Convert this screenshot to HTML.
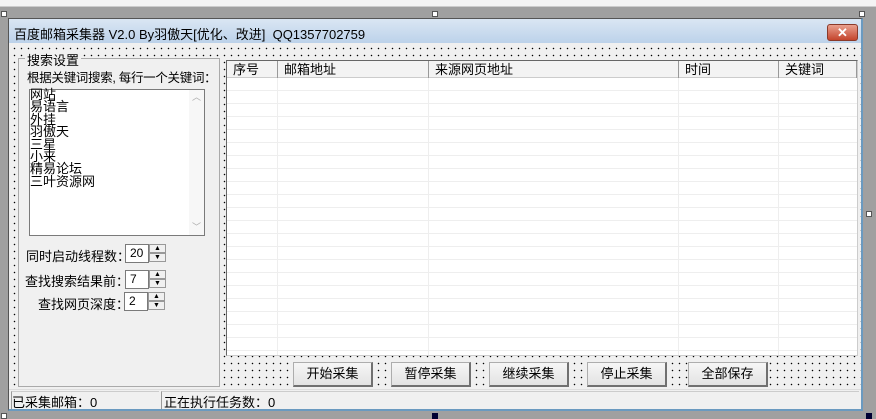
<!DOCTYPE html><html><head><meta charset="utf-8"><style>
*{margin:0;padding:0;box-sizing:border-box}
body{width:876px;height:418px;overflow:hidden;background:#a0a0a0;font-family:"Liberation Sans","Noto Sans CJK SC",sans-serif;font-size:12px;color:#000;position:relative}
.a{position:absolute}
.dots{background-color:#f0f0f0;background-image:radial-gradient(circle,#000 0.6px,transparent 0.9px);background-size:7px 7px;background-position:2px 2px}
.btn{position:absolute;top:362px;width:80px;height:25px;background:linear-gradient(#f6f6f6,#e3e3e3);border:1px solid #adadad;border-right:2px solid #707070;border-bottom:2px solid #707070;text-align:center;line-height:22px;font-size:13px}
.h{position:absolute;width:6px;height:6px;border:1px solid #555;background:#fff}
.col{position:absolute;top:0;height:17px;border-right:1px solid #999;padding-left:6px;line-height:17px;font-size:13px}
.spin{position:absolute;width:42px;height:19px}
.spin .i{position:absolute;left:0;top:0;width:24px;height:19px;border:1px solid #7a7a7a;background:#fff;padding-left:4px;line-height:17px}
.spin .u,.spin .d{position:absolute;left:24px;width:17px;height:9px;border:1px solid #999;background:#f0f0f0;font-size:7px;line-height:7px;text-align:center}
.spin .u{top:0}.spin .d{top:9px}
.lbl{position:absolute;font-size:13px}
</style></head><body>
<div class="a" style="left:0;top:0;width:876px;height:7px;background:#f4f4f4;border-bottom:1px solid #ccc"></div>
<div class="h" style="left:1px;top:11px"></div><div class="h" style="left:432px;top:11px"></div><div class="h" style="left:859px;top:11px"></div>
<div class="h" style="left:866px;top:211px"></div><div class="h" style="left:1px;top:413px"></div><div class="h" style="left:432px;top:413px;background:#003;border-color:#003"></div><div class="h" style="left:866px;top:413px;background:#003;border-color:#003"></div>
<div class="a" style="left:8px;top:18px;width:855px;height:393px;background:#f0f0f0;border:1px solid #555;border-right:2px solid #6a9ac0;border-bottom:2px solid #6a9ac0"></div>
<div class="a" style="left:9px;top:19px;width:852px;height:24px;background:linear-gradient(#dae6f3,#bcd2ea)"></div>
<div class="a" style="left:14px;top:24px;font-size:13px">百度邮箱采集器 V2.0 By羽傲天[优化、改进]&nbsp; QQ1357702759</div>
<div class="a" style="left:827px;top:24px;width:31px;height:17px;border:1px solid #8a3a2a;border-radius:3px;background:linear-gradient(#e9a08e,#c4452c);color:#fff;font-weight:bold;text-align:center;line-height:15px;font-size:13px">✕</div>
<div class="a dots" style="left:9px;top:43px;width:852px;height:346px"></div>
<div class="a" style="left:18px;top:58px;width:202px;height:329px;background:#f0f0f0;border:1px solid #aaa"></div>
<div class="lbl" style="left:25px;top:50px;background:#f0f0f0;padding:0 2px">搜索设置</div>
<div class="lbl" style="left:27px;top:67px;font-size:12.5px;letter-spacing:-0.3px">根据关键词搜索, 每行一个关键词：</div>
<div class="a" style="left:29px;top:89px;width:176px;height:147px;background:#fff;border:1px solid #7a7a7a"></div>
<div class="a" style="left:189px;top:90px;width:15px;height:145px;background:#f7f7f7;color:#aaa;font-size:9px;text-align:center">︿<div style="position:absolute;bottom:2px;width:15px">﹀</div></div>
<div class="a" style="left:30px;top:89px;font-size:13px;line-height:12.4px">网站<br>易语言<br>外挂<br>羽傲天<br>三星<br>小来<br>精易论坛<br>三叶资源网</div>
<div class="lbl" style="left:26px;top:246px">同时启动线程数：</div>
<div class="spin" style="left:125px;top:244px"><div class="i">20</div><div class="u">▲</div><div class="d">▼</div></div>
<div class="lbl" style="left:25px;top:271px">查找搜索结果前：</div>
<div class="spin" style="left:125px;top:270px"><div class="i">7</div><div class="u">▲</div><div class="d">▼</div></div>
<div class="lbl" style="left:38px;top:294px">查找网页深度：</div>
<div class="spin" style="left:124px;top:292px"><div class="i">2</div><div class="u">▲</div><div class="d">▼</div></div>
<div class="a" style="left:226px;top:60px;width:632px;height:296px;border:1px solid #666;border-right-color:#ccc;border-bottom-color:#ccc;background-color:#fff;background-image:linear-gradient(#eee 1px,transparent 1px);background-size:100% 13px;background-position:0 3px;overflow:hidden">
<div class="a" style="left:50px;top:17px;width:1px;height:280px;background:#eee"></div>
<div class="a" style="left:201px;top:17px;width:1px;height:280px;background:#eee"></div>
<div class="a" style="left:451px;top:17px;width:1px;height:280px;background:#eee"></div>
<div class="a" style="left:551px;top:17px;width:1px;height:280px;background:#eee"></div>
<div class="a" style="left:0;top:0;width:632px;height:17px;background:#f3f3f3;border-bottom:1px solid #ccc"></div>
<div class="col" style="left:0;width:51px">序号</div>
<div class="col" style="left:51px;width:151px">邮箱地址</div>
<div class="col" style="left:202px;width:250px">来源网页地址</div>
<div class="col" style="left:452px;width:100px">时间</div>
<div class="col" style="left:552px;width:78px">关键词</div>
</div>
<div class="btn" style="left:293px">开始采集</div>
<div class="btn" style="left:391px">暂停采集</div>
<div class="btn" style="left:489px">继续采集</div>
<div class="btn" style="left:587px">停止采集</div>
<div class="btn" style="left:688px">全部保存</div>
<div class="a" style="left:9px;top:389px;width:852px;height:20px;background:#f0f0f0;border-top:1px solid #ddd"></div>
<div class="a" style="left:11px;top:391px;width:148px;height:18px;border-left:1px solid #999;border-top:1px solid #ccc"></div>
<div class="a" style="left:161px;top:391px;width:698px;height:18px;border-left:1px solid #999;border-top:1px solid #ccc"></div>
<div class="lbl" style="left:12px;top:392px">已采集邮箱：0</div>
<div class="lbl" style="left:164px;top:392px">正在执行任务数：0</div>
</body></html>
